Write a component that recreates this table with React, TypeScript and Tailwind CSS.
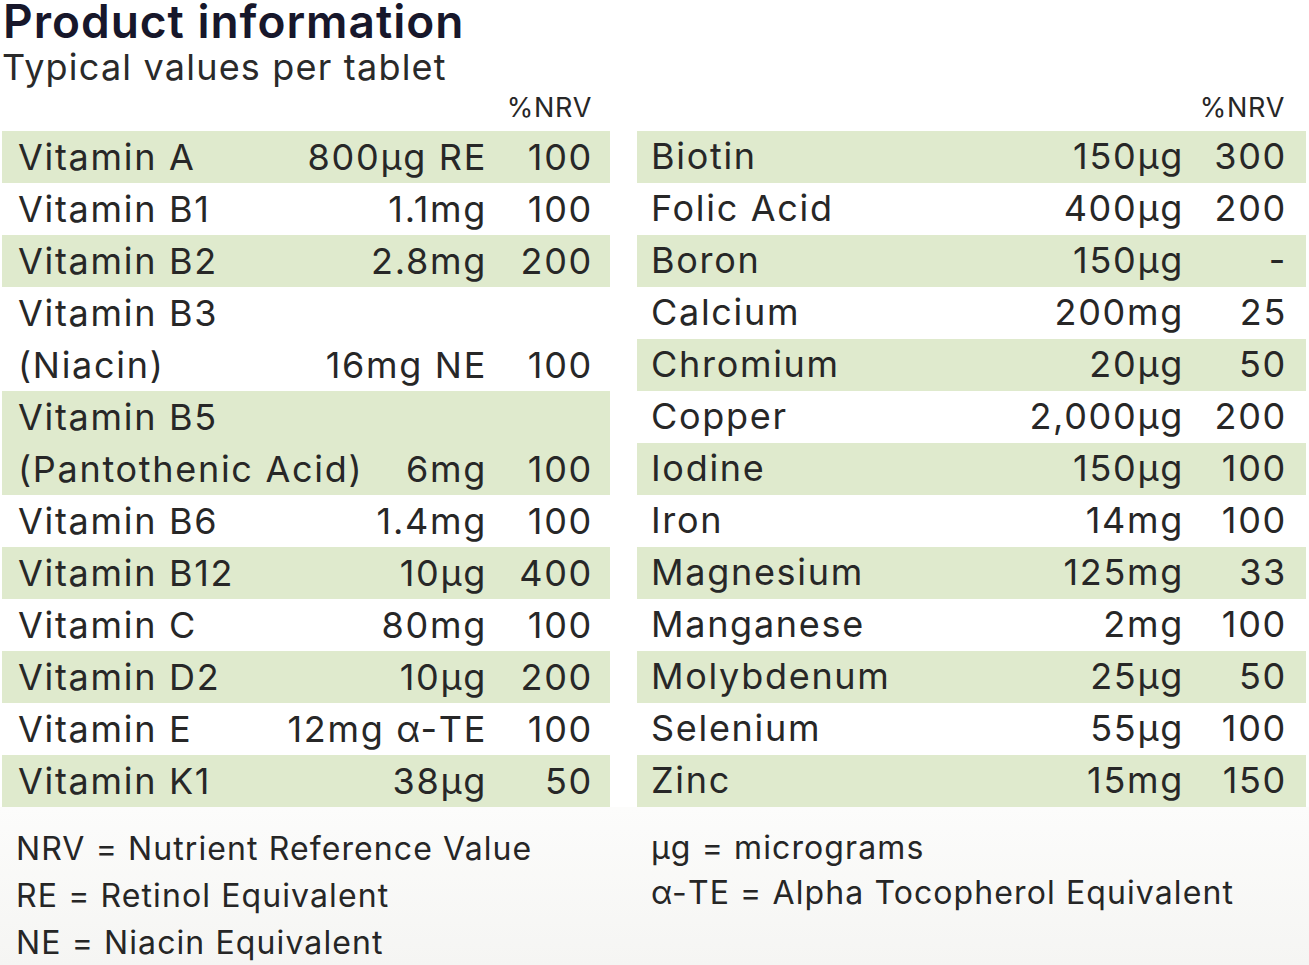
import React from "react";

type Row = { name: string; amount?: string; nrv?: string; green: boolean };

const left: Row[] = [
  { name: "Vitamin A", amount: "800µg RE", nrv: "100", green: true },
  { name: "Vitamin B1", amount: "1.1mg", nrv: "100", green: false },
  { name: "Vitamin B2", amount: "2.8mg", nrv: "200", green: true },
  { name: "Vitamin B3", green: false },
  { name: "(Niacin)", amount: "16mg NE", nrv: "100", green: false },
  { name: "Vitamin B5", green: true },
  { name: "(Pantothenic Acid)", amount: "6mg", nrv: "100", green: true },
  { name: "Vitamin B6", amount: "1.4mg", nrv: "100", green: false },
  { name: "Vitamin B12", amount: "10µg", nrv: "400", green: true },
  { name: "Vitamin C", amount: "80mg", nrv: "100", green: false },
  { name: "Vitamin D2", amount: "10µg", nrv: "200", green: true },
  { name: "Vitamin E", amount: "12mg α-TE", nrv: "100", green: false },
  { name: "Vitamin K1", amount: "38µg", nrv: "50", green: true },
];

const right: Row[] = [
  { name: "Biotin", amount: "150µg", nrv: "300", green: true },
  { name: "Folic Acid", amount: "400µg", nrv: "200", green: false },
  { name: "Boron", amount: "150µg", nrv: "-", green: true },
  { name: "Calcium", amount: "200mg", nrv: "25", green: false },
  { name: "Chromium", amount: "20µg", nrv: "50", green: true },
  { name: "Copper", amount: "2,000µg", nrv: "200", green: false },
  { name: "Iodine", amount: "150µg", nrv: "100", green: true },
  { name: "Iron", amount: "14mg", nrv: "100", green: false },
  { name: "Magnesium", amount: "125mg", nrv: "33", green: true },
  { name: "Manganese", amount: "2mg", nrv: "100", green: false },
  { name: "Molybdenum", amount: "25µg", nrv: "50", green: true },
  { name: "Selenium", amount: "55µg", nrv: "100", green: false },
  { name: "Zinc", amount: "15mg", nrv: "150", green: true },
];

function LeftRow({ r }: { r: Row }) {
  return (
    <div
      className={`flex h-[52px] items-center pl-[16px] pr-[17px] ${r.green ? "bg-[#dfeacd]" : ""}`}
    >
      <span className="flex-1 whitespace-nowrap">{r.name}</span>
      <span className="whitespace-nowrap text-right">{r.amount ?? ""}</span>
      <span className="w-[106px] text-right whitespace-nowrap">{r.nrv ?? ""}</span>
    </div>
  );
}

function RightRow({ r }: { r: Row }) {
  return (
    <div
      className={`flex h-[52px] items-center pb-[3px] pl-[14px] pr-[19px] ${r.green ? "bg-[#dfeacd]" : ""}`}
    >
      <span className="flex-1 whitespace-nowrap">{r.name}</span>
      <span className="whitespace-nowrap text-right">{r.amount ?? ""}</span>
      <span className="w-[103px] text-right whitespace-nowrap">{r.nrv ?? ""}</span>
    </div>
  );
}

export default function App() {
  return (
    <div
      className="relative h-[965px] w-[1309px] overflow-hidden bg-white text-[#272727]"
      style={{ fontFamily: "Inter, 'Noto Sans', sans-serif" }}
    >
      <div className="h-[46px] pl-[3px] text-[46px] font-semibold leading-[42px] tracking-[1px] text-[#17172b]">
        Product information
      </div>
      <div className="h-[42px] pl-[2px] text-[36px] leading-[42px] tracking-[1.2px] text-[#2a2a2a]">
        Typical values per tablet
      </div>
      <div className="flex h-[43px] text-[27px] leading-[40px] tracking-[0.7px]">
        <div className="ml-[2px] w-[608px] pr-[18px] text-right">%NRV</div>
        <div className="ml-[27px] w-[669px] pr-[21px] text-right">%NRV</div>
      </div>
      <div className="flex text-[36px] tracking-[1.7px]">
        <div className="ml-[2px] w-[608px]">
          {left.map((r) => (
            <LeftRow key={r.name} r={r} />
          ))}
        </div>
        <div className="ml-[27px] w-[669px]">
          {right.map((r) => (
            <RightRow key={r.name} r={r} />
          ))}
        </div>
      </div>
      <div className="flex h-[158px] bg-gradient-to-b from-[#fcfcfb] to-[#f5f5f3] pt-[18px] text-[32px] leading-[47px] tracking-[1.1px] text-[#262626]">
        <div className="w-[637px] pl-[16px]">
          <div>NRV = Nutrient Reference Value</div>
          <div>RE = Retinol Equivalent</div>
          <div>NE = Niacin Equivalent</div>
        </div>
        <div className="pl-[14px] leading-[45px]">
          <div>µg = micrograms</div>
          <div>α-TE = Alpha Tocopherol Equivalent</div>
        </div>
      </div>
    </div>
  );
}
